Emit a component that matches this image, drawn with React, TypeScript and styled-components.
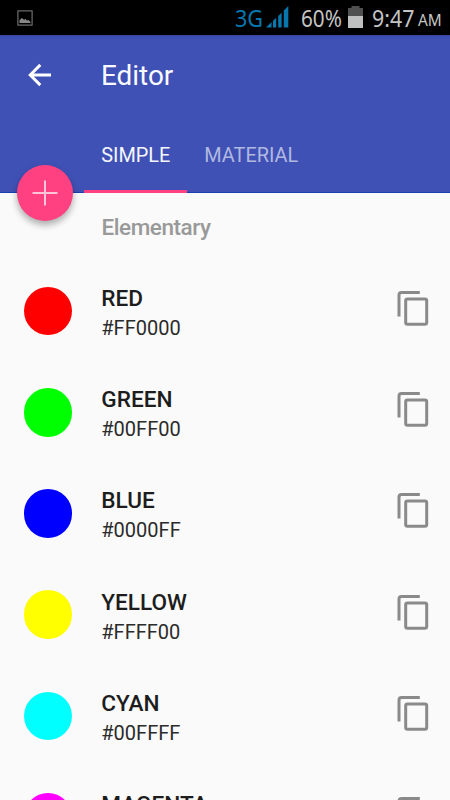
import React from "react";
import styled, { createGlobalStyle } from "styled-components";

const GlobalStyle = createGlobalStyle`
  * { box-sizing: border-box; }
  html, body { margin: 0; height: 100%; overflow: hidden; background: #fafafa; }
  body { font-family: Roboto, "Liberation Sans", sans-serif; }
`;

const Screen = styled.div`
  width: 450px;
  height: 800px;
  overflow: hidden;
  display: flex;
  flex-direction: column;
  background: #fafafa;
`;

const StatusBar = styled.div`
  height: 35px;
  flex: none;
  display: flex;
  align-items: center;
  justify-content: space-between;
  padding: 0 8px 0 17px;
  background: #000;
`;

const StatusGroup = styled.div`
  display: flex;
  align-items: center;
  height: 35px;
`;

const StatusText = styled.span<{ $w: number; $color?: string; $size?: number; $stretch?: number }>`
  width: ${(p) => p.$w}px;
  flex: none;
  font-family: "Noto Sans", Roboto, sans-serif;
  font-size: ${(p) => p.$size ?? 23}px;
  line-height: 32px;
  padding-top: ${(p) => (p.$size ? 4 : 1)}px;
  color: ${(p) => p.$color ?? "#c4c4c4"};
  transform: scaleX(${(p) => p.$stretch ?? 1});
  transform-origin: left center;
  white-space: nowrap;
`;

const Header = styled.header`
  position: relative;
  height: 158px;
  flex: none;
  display: flex;
  flex-direction: column;
  background: #3f51b5;
  border-bottom: 1px solid #1c3fae;
  box-shadow: inset 0 3px 2px -2px #35449a;
`;

const Toolbar = styled.div`
  height: 80px;
  display: flex;
  align-items: center;
  padding-left: 25px;
`;

const BackButton = styled.button`
  width: 76px;
  height: 32px;
  padding: 0;
  border: 0;
  background: none;
  display: flex;
  align-items: center;
`;

const Title = styled.h1`
  margin: 2px 0 0;
  font-size: 27.9px;
  line-height: 32px;
  font-weight: 400;
  color: #f9faff;
`;

const Tabs = styled.nav`
  flex: 1;
  display: flex;
  padding-left: 84px;
  margin-bottom: -1px;
`;

const Tab = styled.div<{ $active?: boolean }>`
  height: 78px;
  padding: 28px 16.8px 0 17.2px;
  font-size: 19.9px;
  line-height: 26px;
  color: ${(p) => (p.$active ? "#f5f6fc" : "#b1b8e0")};
  border-bottom: 3px solid ${(p) => (p.$active ? "#ff4081" : "transparent")};
`;

const Fab = styled.button`
  position: absolute;
  left: 17px;
  top: 130px;
  width: 56px;
  height: 56px;
  padding: 0;
  border: 0;
  border-radius: 50%;
  background: #ff4081;
  box-shadow: 0 4px 7px rgba(0, 0, 0, 0.32);
  display: flex;
  align-items: center;
  justify-content: center;
`;

const Subheader = styled.h2`
  margin: 0;
  height: 67.5px;
  flex: none;
  padding: 20px 0 0 101.5px;
  font-size: 22.5px;
  line-height: 28px;
  font-weight: 500;
  letter-spacing: -0.45px;
  color: #999;
`;

const List = styled.ul`
  margin: 0;
  padding: 0;
  list-style: none;
`;

const Row = styled.li`
  height: 101.2px;
  display: flex;
  align-items: center;
  padding: 0 20px 0 23.5px;
`;

const Swatch = styled.span<{ $color: string }>`
  width: 48.5px;
  height: 48.5px;
  flex: none;
  border-radius: 50%;
  background: ${(p) => p.$color};
`;

const Labels = styled.div`
  flex: 1;
  margin-left: 29.3px;
  padding-top: 4px;
`;

const Name = styled.div`
  font-size: 22.6px;
  line-height: 30px;
  font-weight: 500;
  color: #1d1d1d;
`;

const Hex = styled.div`
  font-size: 20px;
  line-height: 28px;
  color: #2b2b2b;
`;

const CopyButton = styled.button`
  width: 33px;
  height: 38px;
  padding: 0;
  margin-top: -4px;
  border: 0;
  background: none;
`;

const colors = [
  { name: "RED", hex: "#FF0000" },
  { name: "GREEN", hex: "#00FF00" },
  { name: "BLUE", hex: "#0000FF" },
  { name: "YELLOW", hex: "#FFFF00" },
  { name: "CYAN", hex: "#00FFFF" },
  { name: "MAGENTA", hex: "#FF00FF" },
];

const PictureIcon = () => (
  <svg width="16" height="16" viewBox="0 0 16 16">
    <rect x="0.9" y="0.9" width="14.2" height="14.2" fill="none" stroke="#777" strokeWidth="1.1" />
    <path d="M2.5 13V10.2L4.8 8 7 9.8 8.5 9 10 10.5 11.5 10 13.5 12V13Z" fill="#888" />
  </svg>
);

const SignalSvg = styled.svg`
  flex: none;
  margin: -2px 11px 0 0;
`;

const BatterySvg = styled.svg`
  flex: none;
  margin: -1px 9px 0 0;
`;

const SignalIcon = () => (
  <SignalSvg width="24" height="24" viewBox="0 0 24 24" fill="#0877ae">
    <path d="M0 22.5 5.5 17V22.5Z" />
    <path d="M7 22.5V15.8L10.2 12.8V22.5Z" />
    <path d="M12.2 22.5V11L15.6 7.8V22.5Z" />
    <path d="M17.8 22.5V5.4L22.3 1V22.5Z" />
  </SignalSvg>
);

const BatteryIcon = () => (
  <BatterySvg width="15" height="22" viewBox="0 0 15 22">
    <path d="M3.5 0H11.5V2H15V11H0V2H3.5Z" fill="#505050" />
    <rect y="10" width="15" height="12" fill="#c0c0c0" />
  </BatterySvg>
);

const BackIcon = () => (
  <svg width="28" height="28" viewBox="0 0 28 28" fill="none" stroke="#fff" strokeWidth="2.9">
    <path d="M26 14H5.5M15.3 3.9 5.2 14 15.3 24.1" />
  </svg>
);

const PlusIcon = () => (
  <svg width="28" height="28" viewBox="0 0 28 28" fill="none" stroke="#ffc4d8" strokeWidth="2">
    <path d="M14 1.5V26.5M1.5 14H26.5" />
  </svg>
);

const CopyIcon = () => (
  <svg width="33" height="38" viewBox="0 0 33 38" fill="none" stroke="#8a8a8a" strokeWidth="3">
    <path d="M2 26.5V5.2Q2 2.6 4.6 2.6H22.8" />
    <rect x="8.7" y="9" width="21" height="25.2" rx="1.8" />
  </svg>
);

export default function App() {
  return (
    <Screen>
      <GlobalStyle />
      <StatusBar>
        <PictureIcon />
        <StatusGroup>
          <StatusText $w={31} $color="#0877ae" $stretch={0.94}>3G</StatusText>
          <SignalIcon />
          <StatusText $w={47} $stretch={0.9}>60%</StatusText>
          <BatteryIcon />
          <StatusText $w={46} $stretch={0.93}>9:47</StatusText>
          <StatusText $w={24} $size={16} $stretch={0.96}>AM</StatusText>
        </StatusGroup>
      </StatusBar>
      <Header>
        <Toolbar>
          <BackButton aria-label="Back"><BackIcon /></BackButton>
          <Title>Editor</Title>
        </Toolbar>
        <Tabs>
          <Tab $active>SIMPLE</Tab>
          <Tab>MATERIAL</Tab>
        </Tabs>
        <Fab aria-label="Add color"><PlusIcon /></Fab>
      </Header>
      <Subheader>Elementary</Subheader>
      <List>
        {colors.map((c) => (
          <Row key={c.name}>
            <Swatch $color={c.hex} />
            <Labels>
              <Name>{c.name}</Name>
              <Hex>{c.hex}</Hex>
            </Labels>
            <CopyButton aria-label={`Copy ${c.name}`}><CopyIcon /></CopyButton>
          </Row>
        ))}
      </List>
    </Screen>
  );
}
